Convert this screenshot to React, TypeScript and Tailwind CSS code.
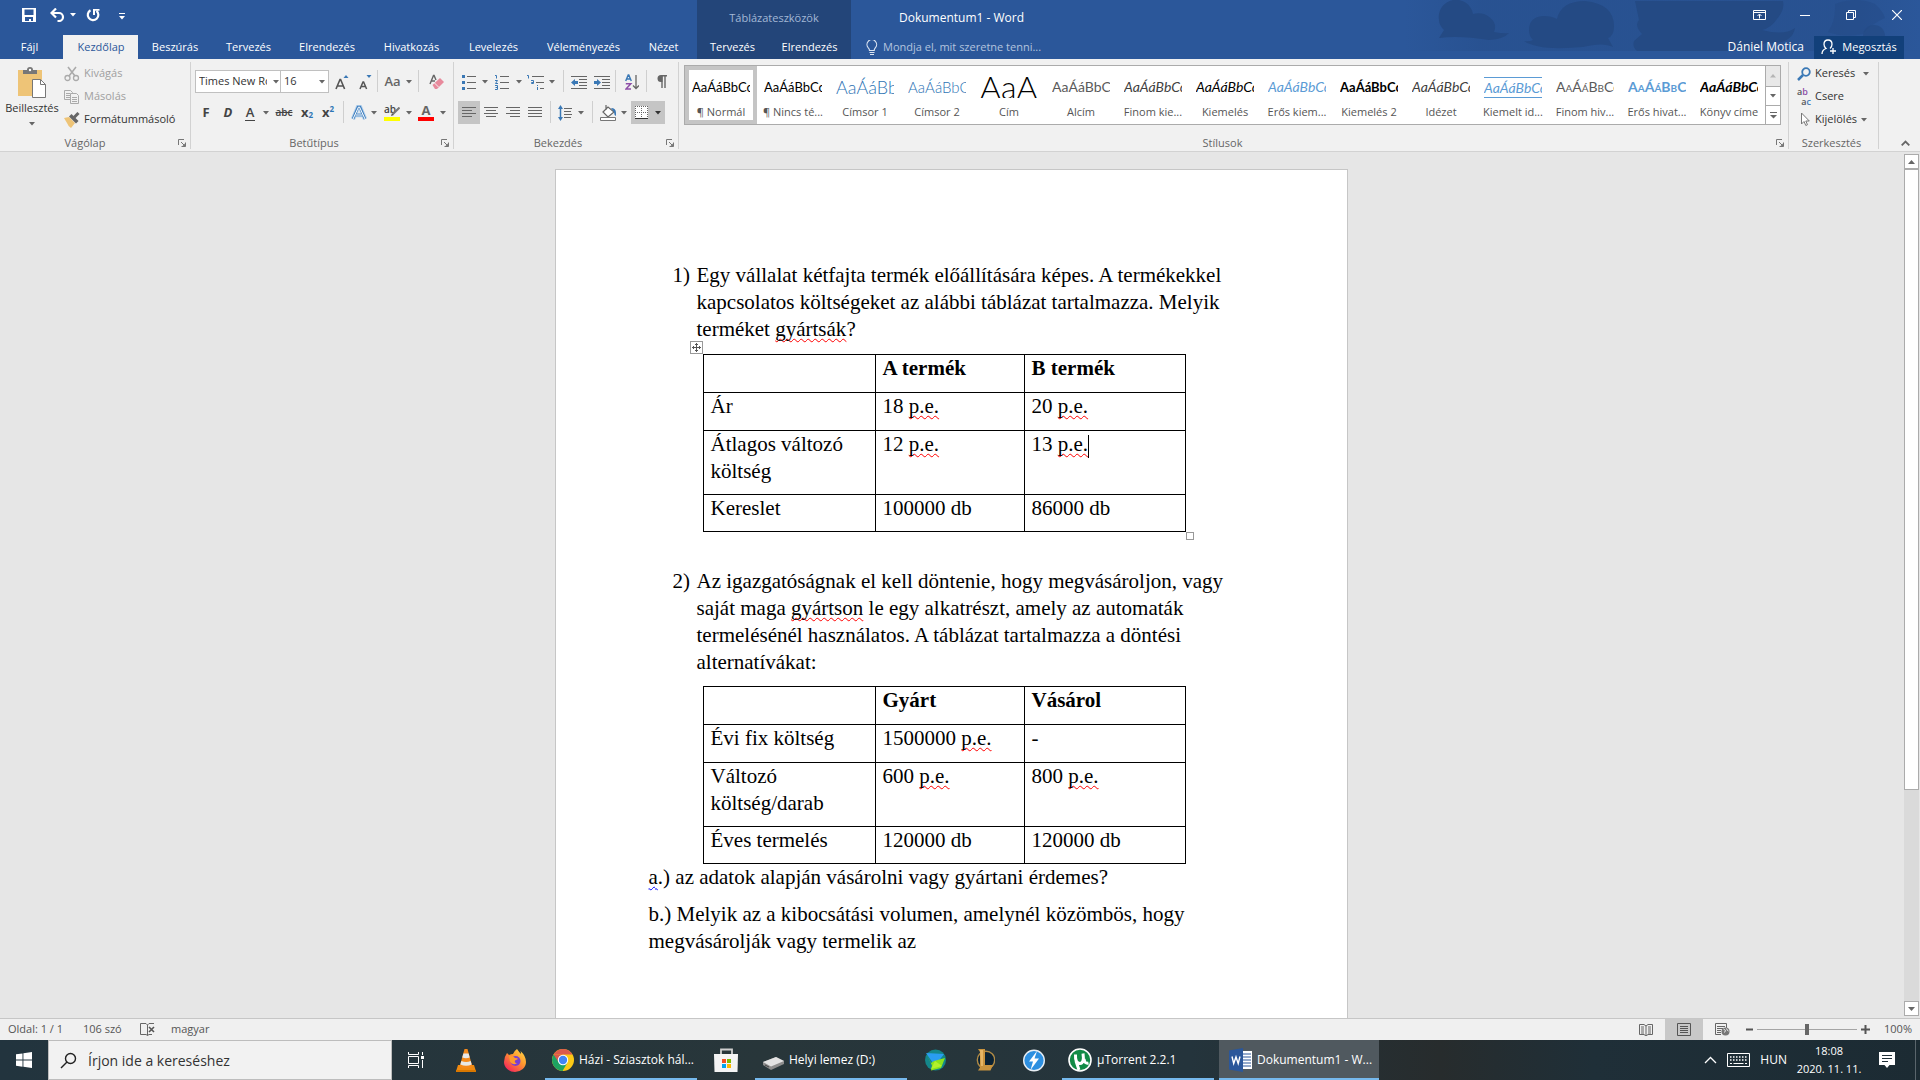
import type { ReactNode } from "react";
import clsx from "clsx";

const UI = "font-['Open_Sans','Noto_Sans',sans-serif]";

function Svg({ w = 16, h = 16, children }: { w?: number; h?: number; children: ReactNode }) {
  return (
    <svg width={w} height={h} viewBox={`0 0 ${w} ${h}`} fill="none" className="block shrink-0" aria-hidden="true">
      {children}
    </svg>
  );
}

function Arrow({ color = "#666" }: { color?: string }) {
  return (
    <Svg w={6} h={4}>
      <path d="M0 0h6L3 3.5z" fill={color} />
    </Svg>
  );
}

interface ToolProps {
  label: string;
  className?: string;
  active?: boolean;
  children: ReactNode;
}

function Tool({ label, className, active, children }: ToolProps) {
  return (
    <button
      type="button"
      aria-label={label}
      title={label}
      className={clsx("flex h-[23px] shrink-0 items-center justify-center", active && "bg-[#c5c5c5]", className)}
    >
      {children}
    </button>
  );
}

function ArrowTool({ label, className = "w-[10px]" }: { label: string; className?: string }) {
  return (
    <Tool label={label} className={className}>
      <Arrow />
    </Tool>
  );
}

function Divider({ className }: { className?: string }) {
  return <div className={clsx("h-[22px] w-px shrink-0 bg-[#cfcfcf]", className)} />;
}

function Launcher({ label }: { label: string }) {
  return (
    <button type="button" aria-label={label} className="absolute right-1 bottom-[2px]">
      <Svg w={8} h={8}>
        <path d="M.5 6V.5H6M3 3l3 3M7.500 3.500v4h-4" stroke="#777" />
        <path d="M7.500 4v3.500H4z" fill="#777" />
      </Svg>
    </button>
  );
}

interface GroupProps {
  title: string;
  className?: string;
  launcher?: boolean;
  children: ReactNode;
}

function Group({ title, className, launcher = true, children }: GroupProps) {
  return (
    <section aria-label={title} className={clsx("relative flex shrink-0 flex-col border-r border-[#d2d2d2]", className)}>
      <div className="flex-1">{children}</div>
      <h2 className={clsx("text-center text-[11px] leading-[12px] text-[#666]", launcher ? "pr-5" : "pr-3")}>{title}</h2>
      {launcher && <Launcher label={`${title} beállításai`} />}
    </section>
  );
}

/* ---------- title bar ---------- */

const tabs = [
  { name: "Beszúrás", width: "w-[74px]" },
  { name: "Tervezés", width: "w-[73px]" },
  { name: "Elrendezés", width: "w-[84px]" },
  { name: "Hivatkozás", width: "w-[85px]" },
  { name: "Levelezés", width: "w-[79px]" },
  { name: "Véleményezés", width: "w-[101px]" },
  { name: "Nézet", width: "w-[59px]" },
];

function Clouds() {
  return (
    <svg className="absolute top-0 right-0" width="515" height="59" viewBox="0 0 515 59" aria-hidden="true">
      <defs>
        <linearGradient id="haze" x1="0" x2="1">
          <stop offset="0" stopColor="#244a84" stopOpacity="0" />
          <stop offset=".15" stopColor="#244a84" stopOpacity=".4" />
          <stop offset=".85" stopColor="#244a84" stopOpacity=".4" />
          <stop offset="1" stopColor="#244a84" stopOpacity="0" />
        </linearGradient>
      </defs>
      <rect x="0" y="0" width="515" height="51" fill="url(#haze)" />
      <g fill="#244a84">
        <path d="M34 20a17 17 0 0 1 34-6a17 14 0 0 1 21 18q10 2 15 1q-5 6-20 7q-30-5-50-2l5-8q-5-5-5-10z" />
        <path d="M124 30q0-13 14-14q9 0 14 3q4-18 28-18q29 3 29 25q0 10-6 12l5 9q-10-5-30 0q-45 4-59-6q5 1 9-1q-4-4-4-10z" />
        <path d="M230 1h148q2 9-6 18q-6 9-15 11q22 6 33-2q-3 17-30 15q-14 8-40 8h-88q-5-4-3-10l8-7q-8-9-3-14z" />
        <path d="M430 4q22-8 40 0q8 7 10 14q-14 6-22 16q-20 4-35-2q8-12 7-28z" fillOpacity=".45" />
        <circle cx="469" cy="36" r="11" fillOpacity=".7" />
      </g>
    </svg>
  );
}

function TitleBar() {
  return (
    <header className="relative flex h-[59px] shrink-0 bg-[#2b579a] text-[11px] text-white">
      <Clouds />
      <div className="relative flex w-[697px] shrink-0 flex-col">
        <div className="flex h-[35px] items-center pb-[6px] pl-[22px]">
          <button type="button" aria-label="Mentés">
            <Svg w={14} h={14}>
              <path d="M0 0h14v14H0z" fill="#fff" />
              <path d="M2.500 1.500h9V7h-9zM3 9h8v4H9v-2H7v2H3z" fill="#2b579a" />
            </Svg>
          </button>
          <button type="button" aria-label="Visszavonás" className="ml-[14px]">
            <Svg w={16} h={14}>
              <path d="M6 .5L1.500 5L6 9.500M2 5h7a4 4 0 0 1 0 8H7.500" stroke="#fff" strokeWidth="2.200" />
            </Svg>
          </button>
          <button type="button" aria-label="Visszavonási lista" className="ml-[4px]">
            <Arrow color="#fff" />
          </button>
          <button type="button" aria-label="Ismétlés" className="ml-[10px]">
            <Svg w={14} h={14}>
              <path d="M4.500 2.200A5.300 5.300 0 1 0 10.500 2.800" stroke="#fff" strokeWidth="2.200" />
              <path d="M7 1h6.500v1.800H9V7H7z" fill="#fff" />
            </Svg>
          </button>
          <button type="button" aria-label="Gyorselérési eszköztár testreszabása" className="mt-[4px] ml-[19px]">
            <Svg w={6} h={7}>
              <path d="M0 .5h6" stroke="#fff" />
              <path d="M0 3h6L3 6.500z" fill="#fff" />
            </Svg>
          </button>
        </div>
        <nav className="flex h-6">
          <button type="button" className="w-[63px] pr-[4px]">
            Fájl
          </button>
          <button type="button" className="w-[75px] bg-[#f1f1f1] pl-px text-[#2b579a]">
            Kezdőlap
          </button>
          {tabs.map((t) => (
            <button type="button" key={t.name} className={t.width}>
              {t.name}
            </button>
          ))}
        </nav>
      </div>
      <div className="relative flex w-[154px] shrink-0 flex-col bg-[#234579]">
        <div className="h-[35px] text-center leading-[35px] text-[#a3b8d6]">Táblázateszközök</div>
        <div className="flex h-6">
          <button type="button" className="w-[71px]">
            Tervezés
          </button>
          <button type="button" className="w-[83px]">
            Elrendezés
          </button>
        </div>
      </div>
      <div className="relative flex min-w-0 flex-1 flex-col">
        <div className="flex h-[35px] justify-between">
          <h1 className="pl-[48px] text-[12px] leading-[35px]">Dokumentum1 - Word</h1>
          <div className="flex h-[30px]">
            <button type="button" aria-label="Menüszalag megjelenítési beállításai" className="flex w-[46px] items-center justify-center">
              <Svg w={13} h={10}>
                <path d="M.5.5h12v9H.5zM.5 2.500h12M6.500 8.500V4.500M4.500 6l2-2l2 2" stroke="#fff" />
              </Svg>
            </button>
            <button type="button" aria-label="Kis méret" className="flex w-[46px] items-center justify-center">
              <Svg w={10} h={2}>
                <path d="M0 1.500h10" stroke="#fff" />
              </Svg>
            </button>
            <button type="button" aria-label="Előző méret" className="flex w-[46px] items-center justify-center">
              <Svg w={10} h={10}>
                <path d="M.5 2.500h7v7h-7zM2.500 2.500v-2h7v7h-2" stroke="#fff" />
              </Svg>
            </button>
            <button type="button" aria-label="Bezárás" className="flex w-[46px] items-center justify-center">
              <Svg w={10} h={10}>
                <path d="M0 0l10 10M10 0L0 10" stroke="#fff" strokeWidth="1.200" />
              </Svg>
            </button>
          </div>
        </div>
        <div className="flex h-6 items-center pl-[15px]">
          <Svg w={12} h={15}>
            <path d="M3.500 10.500q0-1.500-1.200-2.700a4.800 4.800 0 1 1 7 0Q8.200 9 8.200 10.500zM3.500 12.500h5M4 14.500h4" stroke="#dbe4f1" strokeWidth="1.200" />
          </Svg>
          <input
            type="text"
            aria-label="Mondja el, mit szeretne tenni"
            placeholder="Mondja el, mit szeretne tenni..."
            className="ml-[5px] w-[220px] bg-transparent outline-none placeholder:text-[#b3c4de]"
          />
          <button type="button" className="ml-auto text-[12px]">
            Dániel Motica
          </button>
          <button type="button" className="mr-4 ml-[10px] flex h-[23px] w-[90px] items-center justify-center gap-[5px] bg-[#12407a]">
            <Svg w={16} h={16}>
              <path d="M1 15q0-4 4-5.500Q3 8 3 5.200Q3 1 7 1t4 4.200Q11 8 9 9.500M12 9v6M9 12h6" stroke="#fff" strokeWidth="1.300" />
            </Svg>
            Megosztás
          </button>
        </div>
      </div>
    </header>
  );
}

/* ---------- ribbon ---------- */

function ClipboardGroup() {
  return (
    <Group title="Vágólap" className="w-[191px]">
      <div className="flex">
        <button type="button" className="flex w-[64px] shrink-0 flex-col items-center pt-[5px] text-[11px] leading-4 text-[#333]">
          <Svg w={28} h={31}>
            <path d="M0 3h24v26H0z" fill="#eec477" />
            <path d="M5 3h4q0-3 3-3t3 3h4v4H5z" fill="#777" />
            <circle cx="12" cy="3" r="1.200" fill="#fff" />
            <path d="M14.500 12.500h8l5 5v13h-13z" fill="#fff" stroke="#777" />
            <path d="M22.500 12.500v5h5" stroke="#777" />
          </Svg>
          <span className="mt-[2px] mb-[6px]">Beillesztés</span>
          <Arrow />
        </button>
        <div className="flex flex-col items-start text-[11px] text-[#333]">
          <button type="button" disabled className="flex h-[23px] items-center gap-[4px] text-[#a0a0a0]">
            <Svg>
              <path d="M4 1l7 9M12 1l-7 9" stroke="#aaa" strokeWidth="1.600" />
              <circle cx="3.500" cy="12" r="2.500" stroke="#aaa" strokeWidth="1.300" />
              <circle cx="12" cy="12" r="2.500" stroke="#aaa" strokeWidth="1.300" />
            </Svg>
            Kivágás
          </button>
          <button type="button" disabled className="flex h-[23px] items-center gap-[4px] text-[#a0a0a0]">
            <Svg>
              <path d="M.5 1.500h6l2 2v7h-8zM2 4.500h4M2 6.500h4M2 8.500h4" stroke="#aaa" />
              <path d="M6.500 4.500h6l2 2v8h-8z" fill="#f1f1f1" stroke="#aaa" />
              <path d="M8 8.500h5M8 10.500h5M8 12.500h5" stroke="#aaa" />
            </Svg>
            Másolás
          </button>
          <button type="button" className="flex h-[23px] items-center gap-[4px]">
            <Svg>
              <path d="M0 6l5-1l6 6l-4 5q-3-2-4-5z" fill="#eec477" />
              <path d="M5 4.500L7.500 2l7 7L12 11.500z" fill="#666" />
              <path d="M10 5.500L14.500 1" stroke="#666" strokeWidth="3" />
            </Svg>
            Formátummásoló
          </button>
        </div>
      </div>
    </Group>
  );
}

function FontGroup() {
  return (
    <Group title="Betűtípus" className="w-[263px] pl-[4px]">
      <div className="flex pt-[8px]">
        <div className="relative flex h-[23px] w-[88px] items-center border border-[#c0c0c0] bg-white">
          <select
            aria-label="Betűtípus"
            className="h-full w-[71px] appearance-none overflow-hidden bg-transparent pl-[3px] text-[11px] whitespace-nowrap text-[#333] outline-none"
          >
            <option>Times New Roman</option>
          </select>
          <div className="ml-[6px]">
            <Arrow />
          </div>
        </div>
        <div className="flex h-[23px] w-[49px] items-center border border-l-0 border-[#c0c0c0] bg-white">
          <select aria-label="Betűméret" className="h-full w-[38px] appearance-none bg-transparent pl-[3px] text-[11px] text-[#333] outline-none">
            <option>16</option>
          </select>
          <Arrow />
        </div>
        <Tool label="Betűméret növelése" className="w-[25px]">
          <Svg w={14} h={16}>
            <path d="M1 15L5 5.500h.6L9.600 15M2.400 12h5.800" stroke="#555" strokeWidth="1.600" />
            <path d="M8.500 4L11 1l2.500 3z" fill="#3a78b5" />
          </Svg>
        </Tool>
        <Tool label="Betűméret csökkentése" className="w-[21px]">
          <Svg w={14} h={16}>
            <path d="M2 15l3-7h.6l3 7M3 12.500h4.600" stroke="#555" strokeWidth="1.500" />
            <path d="M8.500 1L11 4l2.500-3z" fill="#3a78b5" />
          </Svg>
        </Tool>
        <Divider className="ml-[2px]" />
        <Tool label="Kis- és nagybetűk" className="w-[40px] gap-[5px] text-[13px] font-semibold text-[#666]">
          Aa
          <Arrow />
        </Tool>
        <Divider />
        <Tool label="Formázás törlése" className="ml-[2px] w-[32px]">
          <Svg>
            <path d="M1 10L4.500 1.500h.6L7 6M2.500 7H6" stroke="#666" strokeWidth="1.400" />
            <path d="M3.500 11L11 4l4 4l-7 7H6z" fill="#e88a9c" />
            <path d="M5.500 9l4 4" stroke="#f1f1f1" />
          </Svg>
        </Tool>
      </div>
      <div className="flex pt-[8px] text-[13px] text-[#444]">
        <Tool label="Félkövér" className="w-[22px] font-bold">
          F
        </Tool>
        <Tool label="Dőlt" className="w-[22px] font-bold italic">
          D
        </Tool>
        <Tool label="Aláhúzott" className="w-[22px] font-semibold">
          <span className="border-b border-[#444] px-px leading-[15px]">A</span>
        </Tool>
        <ArrowTool label="Aláhúzás stílusa" />
        <Tool label="Áthúzott" className="w-[26px] text-[10px] font-semibold line-through">
          abc
        </Tool>
        <Tool label="Alsó index" className="w-[20px] font-bold">
          x<sub className="text-[8px] text-[#2e75b5]">2</sub>
        </Tool>
        <Tool label="Felső index" className="w-[22px] font-bold">
          x<sup className="text-[8px] text-[#2e75b5]">2</sup>
        </Tool>
        <Divider className="ml-[4px]" />
        <Tool label="Szöveghatások" className="ml-[5px] w-[20px]">
          <Svg w={16} h={16}>
            <path d="M2 14L7 2h2l5 12M4.500 10h7" stroke="#b9d3ec" strokeWidth="4.500" />
            <path d="M2 14L7 2h2l5 12M4.500 10h7" stroke="#3f7fbf" strokeWidth="2.600" />
            <path d="M2 14L7.500 2h1L14 14M4.500 10h7" stroke="#fff" strokeWidth="1" />
          </Svg>
        </Tool>
        <ArrowTool label="Szöveghatások listája" />
        <Tool label="Kiemelés színe" className="ml-px w-[24px]">
          <span className="relative flex h-4 w-4 items-start border-b-4 border-[#ffff00] text-[10px] leading-[9px] font-semibold">
            ab
            <span className="absolute top-[2px] right-0">
              <Svg w={10} h={10}>
                <path d="M9.500.5L3 7" stroke="#777" strokeWidth="2" />
                <path d="M2 6l2 2l-3 1z" fill="#555" />
              </Svg>
            </span>
          </span>
        </Tool>
        <ArrowTool label="Kiemelési színek" />
        <Tool label="Betűszín" className="w-[24px]">
          <span className="h-4 w-4 border-b-4 border-[#ff0000] text-center leading-[11px] font-bold text-[#666]">A</span>
        </Tool>
        <ArrowTool label="Betűszínek" />
      </div>
    </Group>
  );
}

function ParagraphGroup() {
  return (
    <Group title="Bekezdés" className="w-[225px] pl-[4px]">
      <div className="flex pt-[8px]">
        <Tool label="Listajelek" className="w-[22px]">
          <Svg w={14}>
            <path d="M5 2.500h9M5 8.500h9M5 14.500h9" stroke="#666" />
            <path d="M0 1h3v3H0zM0 7h3v3H0zM0 13h3v3H0z" fill="#3a78b5" />
          </Svg>
        </Tool>
        <ArrowTool label="Listajelek listája" />
        <Tool label="Számozás" className="w-[24px]">
          <Svg w={14}>
            <path d="M5 2.500h9M5 8.500h9M5 14.500h9" stroke="#666" />
            <path d="M0 1.500h1.500V4.500M0 6.500h2.500L.5 9.500h2.500M0 11.500h2.500v4H0M.5 13.500h2" stroke="#3a78b5" />
          </Svg>
        </Tool>
        <ArrowTool label="Számozási formátumok" />
        <Tool label="Többszintű lista" className="w-[24px]">
          <Svg w={18}>
            <path d="M5 2.500h12M9 8.500h8M13 14.500h4" stroke="#666" />
            <path d="M0 1.500h1.500v3M4 6.500h2.500v3H4.500V8.500h2M10.500 11v1M10.500 13v3" stroke="#3a78b5" />
          </Svg>
        </Tool>
        <ArrowTool label="Listastílusok" className="w-[8px]" />
        <Divider className="ml-[7px]" />
        <Tool label="Behúzás csökkentése" className="ml-[2px] w-[26px]">
          <Svg w={16} h={14}>
            <path d="M0 1.500h16M8 4.500h8M8 7.500h8M8 10.500h8M0 13.500h16" stroke="#666" />
            <path d="M0 7.500L4 4v2h3v3H4v2z" fill="#3a78b5" />
          </Svg>
        </Tool>
        <Tool label="Behúzás növelése" className="w-[20px]">
          <Svg w={16} h={14}>
            <path d="M0 1.500h16M8 4.500h8M8 7.500h8M8 10.500h8M0 13.500h16" stroke="#666" />
            <path d="M7 7.500L3 4v2H0v3h3v2z" fill="#3a78b5" />
          </Svg>
        </Tool>
        <Divider className="ml-[3px]" />
        <Tool label="Rendezés" className="ml-px w-[29px]">
          <Svg w={14} h={16}>
            <path d="M.7 7L3.200 1h.6l2.500 6M1.500 5h4" stroke="#3a78b5" strokeWidth="1.400" />
            <path d="M.8 9.700h5L1 15h5" stroke="#8e4fa8" strokeWidth="1.500" />
            <path d="M11 1v13M8 11.500l3 3l3-3" stroke="#666" strokeWidth="1.300" />
          </Svg>
        </Tool>
        <Divider />
        <Tool label="Minden megjelenítése" className="w-[30px]">
          <Svg w={10} h={13}>
            <path d="M5 1v12M8 1v12" stroke="#666" strokeWidth="1.400" />
            <path d="M10 0H4a3.500 3.500 0 0 0 0 7h1.500V1.500H10z" fill="#666" />
          </Svg>
        </Tool>
      </div>
      <div className="flex pt-[8px]">
        <Tool label="Balra zárt" active className="w-[22px]">
          <Svg w={14} h={12}>
            <path d="M0 .5h14M0 3.500h10M0 6.500h14M0 9.500h10" stroke="#666" />
          </Svg>
        </Tool>
        <Tool label="Középre zárt" className="w-[22px]">
          <Svg w={14} h={12}>
            <path d="M0 .5h14M2 3.500h10M0 6.500h14M2 9.500h10" stroke="#666" />
          </Svg>
        </Tool>
        <Tool label="Jobbra zárt" className="w-[22px]">
          <Svg w={14} h={12}>
            <path d="M0 .5h14M4 3.500h10M0 6.500h14M4 9.500h10" stroke="#666" />
          </Svg>
        </Tool>
        <Tool label="Sorkizárt" className="w-[22px]">
          <Svg w={14} h={12}>
            <path d="M0 .5h14M0 3.500h14M0 6.500h14M0 9.500h14" stroke="#666" />
          </Svg>
        </Tool>
        <Divider className="ml-[4px]" />
        <Tool label="Sor- és térköz" className="ml-[3px] w-[22px]">
          <Svg w={14} h={16}>
            <path d="M6 3.500h8M6 6.500h7M6 9.500h8M6 12.500h7" stroke="#666" />
            <path d="M2.500 2v12" stroke="#3a78b5" strokeWidth="1.500" />
            <path d="M0 4l2.500-4L5 4zM0 12l2.500 4L5 12z" fill="#3a78b5" />
          </Svg>
        </Tool>
        <ArrowTool label="Sorköz beállításai" />
        <Divider className="ml-[6px]" />
        <Tool label="Árnyékolás" className="ml-[3px] w-[24px]">
          <Svg w={17} h={16}>
            <path d="M3 7l5-5l6 5l-6 5zM6 0v5" stroke="#666" strokeWidth="1.200" fill="#fff" />
            <path d="M11 3q5 0 5 5v3q-2-1-2-4z" fill="#3a78b5" />
            <path d="M.5 12.500h15v3H.5z" fill="#fff" stroke="#777" />
          </Svg>
        </Tool>
        <ArrowTool label="Árnyékolás színei" className="w-[8px]" />
        <Tool label="Szegélyek" active className="ml-[3px] w-[34px] gap-[7px]">
          <Svg w={13} h={13}>
            <path d="M0 0h13v13H0z" fill="#fff" />
            <path d="M.5 0v12M6.500 0v12M12.500 0v12M0 .5h13M0 6.500h13" stroke="#666" strokeDasharray="1 1" />
            <path d="M0 12.500h13" stroke="#333" />
          </Svg>
          <Arrow color="#333" />
        </Tool>
      </div>
    </Group>
  );
}

const styleItems = [
  { name: "¶ Normál", sample: "AaÁáBbCc", look: "text-[13px] text-black", selected: true },
  { name: "¶ Nincs té...", sample: "AaÁáBbCc", look: "text-[13px] text-black" },
  { name: "Címsor 1", sample: "AaÁáBb", look: "text-[18px] font-light text-[#2e74b5]" },
  { name: "Címsor 2", sample: "AaÁáBbC", look: "text-[15px] font-light text-[#2e74b5]" },
  { name: "Cím", sample: "AaÁ", look: "text-[32px] font-light text-black" },
  { name: "Alcím", sample: "AaÁáBbC", look: "text-[14px] text-[#5a5a5a]" },
  { name: "Finom kie...", sample: "AaÁáBbCc", look: "text-[14px] italic text-[#404040]" },
  { name: "Kiemelés", sample: "AaÁáBbCc", look: "text-[14px] italic text-black" },
  { name: "Erős kiem...", sample: "AaÁáBbCc", look: "text-[14px] italic text-[#5b9bd5]" },
  { name: "Kiemelés 2", sample: "AaÁáBbCc", look: "text-[13px] font-bold text-black" },
  { name: "Idézet", sample: "AaÁáBbCc", look: "text-[14px] italic text-[#404040]" },
  { name: "Kiemelt id...", sample: "AaÁáBbCc", look: "border-y border-[#5b9bd5] text-[14px] italic text-[#5b9bd5]" },
  { name: "Finom hiv...", sample: "AaÁáBbCc", look: "text-[14px] [font-variant:small-caps] text-[#5a5a5a]" },
  { name: "Erős hivat...", sample: "AaÁáBbCc", look: "text-[14px] font-bold [font-variant:small-caps] text-[#5b9bd5]" },
  { name: "Könyv címe", sample: "AaÁáBbCc", look: "text-[14px] font-bold italic text-black" },
];

function StylesGroup() {
  return (
    <Group title="Stílusok" className="min-w-0 flex-1 pr-[7px] pl-[5px]">
      <div className="mt-[3px] flex h-[60px] border border-[#ababab] bg-white">
        <div className="grid min-w-0 flex-1 grid-cols-15 overflow-hidden">
          {styleItems.map((s) => (
            <button
              type="button"
              key={s.name}
              className={clsx("flex min-w-0 flex-col items-center border-4", s.selected ? "border-[#c5c5c5]" : "border-transparent")}
            >
              <span
                className={clsx(
                  "mt-[7px] block h-[21px] w-[58px] overflow-hidden text-left font-[Lato,'Open_Sans',sans-serif] leading-[20px] whitespace-nowrap",
                  s.look,
                )}
              >
                {s.sample}
              </span>
              <span className="mt-[6px] text-[11px] leading-[16px] whitespace-nowrap text-[#555]">{s.name}</span>
            </button>
          ))}
        </div>
        <div className="flex w-[15px] shrink-0 flex-col border-l border-[#ababab]">
          <button type="button" aria-label="Előző stílusok" className="flex h-[21px] items-center justify-center border-b border-[#ababab] bg-[#e8e8e8]">
            <Svg w={6} h={4}>
              <path d="M0 3.500h6L3 0z" fill="#b5b5b5" />
            </Svg>
          </button>
          <button type="button" aria-label="További stílusok" className="flex h-[19px] items-center justify-center border-b border-[#ababab]">
            <Arrow />
          </button>
          <button type="button" aria-label="Összes stílus" className="flex flex-1 items-center justify-center">
            <Svg w={7} h={7}>
              <path d="M0 .5h7" stroke="#666" />
              <path d="M0 3h7L3.500 6.500z" fill="#666" />
            </Svg>
          </button>
        </div>
      </div>
    </Group>
  );
}

function EditingGroup() {
  return (
    <Group title="Szerkesztés" launcher={false} className="w-[90px] pl-[8px]">
      <div className="flex flex-col items-start text-[11px] text-[#333]">
        <button type="button" className="flex h-[23px] w-[72px] items-center gap-[4px]">
          <Svg w={14} h={14}>
            <circle cx="9" cy="5" r="3.800" stroke="#3a78b5" strokeWidth="1.800" />
            <path d="M6 8L1 13" stroke="#3a78b5" strokeWidth="2.500" />
          </Svg>
          <span className="flex-1 text-left">Keresés</span>
          <Arrow />
        </button>
        <button type="button" className="flex h-[23px] items-center gap-[4px]">
          <span className="flex w-[14px] flex-col text-[9px] leading-[10px] font-semibold text-[#555]">
            <span className="text-left">
              a<span className="text-[#8e4fa8]">b</span>
            </span>
            <span className="text-right">
              a<span className="text-[#3a78b5]">c</span>
            </span>
          </span>
          Csere
        </button>
        <button type="button" className="flex h-[23px] items-center gap-[4px]">
          <Svg w={14} h={15}>
            <path d="M4.500 1v11l2.500-2.500l1.800 4l1.700-.8l-1.700-3.700h3.500z" fill="#fff" stroke="#777" />
          </Svg>
          Kijelölés
          <Arrow />
        </button>
      </div>
    </Group>
  );
}

function Ribbon() {
  return (
    <div className="flex h-[93px] shrink-0 border-b border-[#d2d2d2] bg-[#f1f1f1] pt-[3px] pb-[2px]">
      <ClipboardGroup />
      <FontGroup />
      <ParagraphGroup />
      <StylesGroup />
      <EditingGroup />
      <div className="flex w-[41px] shrink-0 items-end justify-end pr-[10px] pb-[3px]">
        <button type="button" aria-label="Menüszalag összecsukása">
          <Svg w={9} h={6}>
            <path d="M.7 5.300L4.500 1.500l3.800 3.800" stroke="#666" strokeWidth="1.800" />
          </Svg>
        </button>
      </div>
    </div>
  );
}

/* ---------- document ---------- */

function Typo({ children, grammar }: { children: ReactNode; grammar?: boolean }) {
  return (
    <span
      className={clsx(
        "underline decoration-1 decoration-wavy underline-offset-2 [text-decoration-skip-ink:none]",
        grammar ? "decoration-[#0000ff]" : "decoration-[#ff0000]",
      )}
    >
      {children}
    </span>
  );
}

interface CostTableProps {
  head: string[];
  rows: ReactNode[][];
  selected?: boolean;
}

function CostTable({ head, rows, selected }: CostTableProps) {
  return (
    <div className="relative ml-[54px] w-[483px]">
      {selected && (
        <>
          <span className="absolute -top-[13px] -left-[13px] flex h-[13px] w-[13px] items-center justify-center border border-[#999] bg-white">
            <Svg w={9} h={9}>
              <path d="M4.500 0v9M0 4.500h9M3 1.500h3M3 7.500h3M1.500 3v3M7.500 3v3" stroke="#555" />
            </Svg>
          </span>
          <span className="absolute -right-[8px] -bottom-[8px] h-[8px] w-[8px] border border-[#999] bg-white" />
        </>
      )}
      <table className="w-full table-fixed border-collapse border border-black">
        <colgroup>
          <col className="w-[172px]" />
          <col className="w-[149px]" />
          <col />
        </colgroup>
        <thead>
          <tr>
            {head.map((h) => (
              <th key={h} className="border border-black px-[7px] pb-[10px] text-left align-top font-bold">
                {h}
              </th>
            ))}
          </tr>
        </thead>
        <tbody>
          {rows.map((cells, i) => (
            <tr key={i}>
              {cells.map((c, j) => (
                <td key={j} className={clsx("border border-black px-[7px] align-top", i > 0 ? "pb-[9px]" : "pb-[10px]")}>
                  {c}
                </td>
              ))}
            </tr>
          ))}
        </tbody>
      </table>
    </div>
  );
}

const pe = <Typo>p.e.</Typo>;

function Page() {
  return (
    <article className="mt-[17px] w-[793px] shrink-0 border border-b-0 border-[#c6c6c6] bg-white pt-[92px] pr-[89px] pl-[93px] font-['Liberation_Serif',serif] text-[21px] leading-[27px] text-black">
      <div className="flex pl-[24px]">
        <span className="w-[24px] shrink-0">1)</span>
        <p className="whitespace-nowrap">
          Egy vállalat kétfajta termék előállítására képes. A termékekkel
          <br />
          kapcsolatos költségeket az alábbi táblázat tartalmazza. Melyik
          <br />
          terméket <Typo>gyártsák</Typo>?
        </p>
      </div>
      <div className="mt-[11px]">
        <CostTable
          selected
          head={["", "A termék", "B termék"]}
          rows={[
            ["Ár", <>18 {pe}</>, <>20 {pe}</>],
            [
              "Átlagos változó költség",
              <>12 {pe}</>,
              <>
                13 {pe}
                <span className="inline-block h-[23px] w-px bg-black align-middle" />
              </>,
            ],
            ["Kereslet", "100000 db", "86000 db"],
          ]}
        />
      </div>
      <div className="mt-[36px] flex pl-[24px]">
        <span className="w-[24px] shrink-0">2)</span>
        <p className="whitespace-nowrap">
          Az igazgatóságnak el kell döntenie, hogy megvásároljon, vagy
          <br />
          saját maga <Typo>gyártson</Typo> le egy alkatrészt, amely az automaták
          <br />
          termelésénél használatos. A táblázat tartalmazza a döntési
          <br />
          alternatívákat:
        </p>
      </div>
      <div className="mt-[10px]">
        <CostTable
          head={["", "Gyárt", "Vásárol"]}
          rows={[
            ["Évi fix költség", <>1500000 {pe}</>, "-"],
            ["Változó költség/darab", <>600 {pe}</>, <>800 {pe}</>],
            ["Éves termelés", "120000 db", "120000 db"],
          ]}
        />
      </div>
      <p>
        <Typo grammar>a</Typo>.) az adatok alapján vásárolni vagy gyártani érdemes?
      </p>
      <p className="mt-[10px] whitespace-nowrap">
        b.) Melyik az a kibocsátási volumen, amelynél közömbös, hogy
        <br />
        megvásárolják vagy termelik az
      </p>
    </article>
  );
}

function ScrollBar() {
  return (
    <div className="mt-[2px] mr-px mb-[2px] flex w-[15px] shrink-0 flex-col bg-[#dadada]">
      <button type="button" aria-label="Görgetés fel" className="flex h-[15px] items-center justify-center border border-[#ababab] bg-white">
        <Svg w={7} h={4}>
          <path d="M0 4h7L3.500 0z" fill="#666" />
        </Svg>
      </button>
      <div className="h-[72%] border border-[#ababab] bg-white" />
      <div className="flex-1" />
      <button type="button" aria-label="Görgetés le" className="flex h-[15px] items-center justify-center border border-[#ababab] bg-white">
        <Svg w={7} h={4}>
          <path d="M0 0h7L3.500 4z" fill="#666" />
        </Svg>
      </button>
    </div>
  );
}

/* ---------- status bar ---------- */

function StatusBar() {
  return (
    <footer className="flex h-[22px] shrink-0 items-center border-t border-[#c6c6c6] bg-[#f0f0f0] pr-2 pl-2 text-[11px] text-[#555]">
      <span className="w-[75px]">Oldal: 1 / 1</span>
      <span className="w-[57px]">106 szó</span>
      <button type="button" aria-label="Nyelvi ellenőrzés">
        <Svg w={15} h={13}>
          <path d="M7.500 2v10.500L6 11.500H.5v-11H6l1.500 1.500L9 .5h5M7.500 12.500L9 11.500h3" stroke="#666" />
          <path d="M9 4l5 5M14 4L9 9" stroke="#555" strokeWidth="1.600" />
        </Svg>
      </button>
      <button type="button" className="ml-4">
        magyar
      </button>
      <div className="ml-auto flex items-center">
        <button type="button" aria-label="Olvasási mód" className="mr-[12px]">
          <Svg w={14} h={12}>
            <path d="M.5.5H5L7 2l2-1.500h4.500v10H9L7 12l-2-1.500H.5zM7 2v10M2 3h3M2 5h3M2 7h3M2 9h3M9 3h3M9 5h3M9 7h3M9 9h3" stroke="#666" />
          </Svg>
        </button>
        <button type="button" aria-label="Nyomtatási elrendezés" className="flex h-[21px] w-[38px] items-center justify-center bg-[#c8c8c8]">
          <Svg w={14} h={13}>
            <path d="M.5.5h13v12H.5zM3 3.500h8M3 5.500h8M3 7.500h8M3 9.500h8" stroke="#555" />
          </Svg>
        </button>
        <button type="button" aria-label="Webes elrendezés" className="ml-[12px]">
          <Svg w={15} h={13}>
            <path d="M6 11.500H.5V.5h11V5M2 3.500h8M2 5.500h6M2 7.500h4M2 9.500h4" stroke="#666" />
            <circle cx="10.500" cy="8.500" r="4" fill="#777" />
            <path d="M8.500 6l2 1.500l-1 2M11.500 5.500l1 2l1 .5" stroke="#f0f0f0" />
          </Svg>
        </button>
        <button type="button" aria-label="Kicsinyítés" className="ml-[16px]">
          <Svg w={7} h={9}>
            <path d="M0 4.500h7" stroke="#555" strokeWidth="2" />
          </Svg>
        </button>
        <input
          type="range"
          aria-label="Nagyítás"
          min={0}
          max={100}
          defaultValue={50}
          className="mx-[4px] h-[12px] w-[100px] appearance-none bg-[linear-gradient(#a5a5a5,#a5a5a5)] bg-[length:100%_1px] bg-center bg-no-repeat [&::-webkit-slider-thumb]:h-[11px] [&::-webkit-slider-thumb]:w-[4px] [&::-webkit-slider-thumb]:appearance-none [&::-webkit-slider-thumb]:bg-[#666]"
        />
        <button type="button" aria-label="Nagyítás növelése">
          <Svg w={9} h={9}>
            <path d="M0 4.500h9M4.500 0v9" stroke="#555" strokeWidth="2" />
          </Svg>
        </button>
        <span className="w-[42px] text-right">100%</span>
      </div>
    </footer>
  );
}

/* ---------- taskbar ---------- */

interface TaskProps {
  icon: ReactNode;
  title: string;
  className: string;
  active?: boolean;
}

function Task({ icon, title, className, active }: TaskProps) {
  return (
    <button
      type="button"
      className={clsx(
        "flex h-full shrink-0 items-center gap-[5px] overflow-hidden border-b-2 border-[#76b9ed] pt-[2px] whitespace-nowrap",
        active && "bg-[#50595f]",
        className,
      )}
    >
      {icon}
      {title}
    </button>
  );
}

function Pinned({ label, children }: { label: string; children: ReactNode }) {
  return (
    <button type="button" aria-label={label} className="flex h-full w-[49px] shrink-0 items-center justify-center">
      {children}
    </button>
  );
}

function ChromeIcon() {
  return (
    <Svg w={22} h={22}>
      <circle cx="11" cy="11" r="11" fill="#fbc916" />
      <path d="M1.500 5.500A11 11 0 0 0 10.500 22L15.500 13.500L11 11z" fill="#1da462" />
      <path d="M1.500 5.500A11 11 0 0 1 20.500 5.500H11z" fill="#db5a4c" />
      <path d="M1.500 5.500L6.500 13L11 5.500z" fill="#db5a4c" />
      <circle cx="11" cy="11" r="5.200" fill="#fff" />
      <circle cx="11" cy="11" r="4.200" fill="#4285f4" />
    </Svg>
  );
}

function Taskbar() {
  return (
    <div className="flex h-10 shrink-0 items-center bg-[linear-gradient(90deg,#22343e,#28363a_40%,#24343c_62%,#272c2d_75%,#1f2f38_83%,#1c2b33)] text-[12px] text-white">
      <button type="button" aria-label="Start" className="flex h-full w-12 shrink-0 items-center justify-center">
        <Svg w={16} h={16}>
          <path d="M0 2.300L6.500 1.400v6.200H0zM7.400 1.300L16 0v7.600H7.400zM0 8.500h6.500v6.200L0 13.800zM7.400 8.500H16V16l-8.600-1.200z" fill="#fff" />
        </Svg>
      </button>
      <label className="flex h-full w-[344px] shrink-0 items-center border border-[#bdbdbd] bg-[#f2f2f2] pl-[11px]">
        <Svg w={17} h={17}>
          <circle cx="10.500" cy="6.500" r="5" stroke="#222" strokeWidth="1.400" />
          <path d="M7 10l-6 6" stroke="#222" strokeWidth="1.400" />
        </Svg>
        <input
          type="text"
          aria-label="Keresés"
          placeholder="Írjon ide a kereséshez"
          className="ml-[11px] min-w-0 flex-1 bg-transparent text-[14px] outline-none placeholder:text-[#333]"
        />
      </label>
      <Pinned label="Feladatnézet">
        <Svg w={17} h={16}>
          <path d="M.5 0v2.500h10V0M.5 4.500h10v7H.5zM.5 16v-2.500h10V16M14.500 0v3M14.500 8v8" stroke="#fff" />
          <path d="M13 4h3v3h-3z" fill="#fff" />
        </Svg>
      </Pinned>
      <Pinned label="VLC">
        <Svg w={20} h={23}>
          <path d="M2 16h16l2 6.500H0z" fill="#f08a10" />
          <path d="M8.500 0h3L16.500 18q-6.500 3-13 0z" fill="#f58a1c" />
          <path d="M7.400 4.500h5.200l1.100 4q-3.700 1.500-7.400 0zM5.300 12q5 2 9.400 0l1 3.500q-5.500 2.500-11.300 0z" fill="#e8e8e8" />
          <path d="M0 21h20v2H0z" fill="#d97700" />
        </Svg>
      </Pinned>
      <Pinned label="Firefox">
        <Svg w={22} h={23}>
          <defs>
            <linearGradient id="fox" x1="1" y1="0" x2=".2" y2="1">
              <stop offset="0" stopColor="#ffe14d" />
              <stop offset=".45" stopColor="#ff9a2e" />
              <stop offset="1" stopColor="#f5205c" />
            </linearGradient>
          </defs>
          <path d="M3 4q1 1 2 2q2-1 4-1q1-3 4-5q2 3 4 5q0-2-.5-3Q22 7 22 13a11 10 0 0 1-22 0Q0 8 3 4z" fill="url(#fox)" />
          <circle cx="11.500" cy="12" r="5" fill="#7a3fd0" />
          <path d="M5 7q4-1 6 2q3 0 3 1l-3 1.500q-1 2 2 3q-5 2-7-2z" fill="#ff9a2e" />
        </Svg>
      </Pinned>
      <Task icon={<ChromeIcon />} title="Házi - Sziasztok hál..." className="ml-[6px] w-[152px] pl-[7px]" />
      <div className="ml-[4px] h-full">
        <Pinned label="Microsoft Store">
          <Svg w={24} h={24}>
            <path d="M7 7V1.500h11V7" stroke="#cfcfcf" strokeWidth="1.800" />
            <path d="M0 6h24l-.5 18H.5z" fill="#f4f4f4" />
            <path d="M8 11h4v4H8z" fill="#f25022" />
            <path d="M13 11h4v4h-4z" fill="#7fba00" />
            <path d="M8 16h4v4H8z" fill="#00a4ef" />
            <path d="M13 16h4v4h-4z" fill="#ffb900" />
          </Svg>
        </Pinned>
      </div>
      <Task
        icon={
          <Svg w={21} h={20}>
            <path d="M0 12l13-5l8 4v3L8 20l-8-5z" fill="#8d8d8d" />
            <path d="M0 12l13-5l8 4L8 16.500z" fill="#e3e3e3" />
            <path d="M2 15l4 2" stroke="#444" />
          </Svg>
        }
        title="Helyi lemez (D:)"
        className="ml-[5px] w-[152px] pl-[8px]"
      />
      <div className="ml-[4px] flex h-full">
        <Pinned label="Letöltéskezelő">
          <Svg w={21} h={22}>
            <circle cx="10.500" cy="11" r="10.500" fill="#14868a" />
            <path d="M1 4l18 1l-9 12z" fill="#2a9df0" />
            <path d="M1 4l5 10l3-2l11-3l-4 10l-10 2.500l1-5z" fill="#8be31c" />
            <path d="M6 20l4-8l7 5z" fill="#b3f02c" />
            <path d="M5 5l13 1l-8 5z" fill="#2a9df0" />
          </Svg>
        </Pinned>
        <Pinned label="League of Legends">
          <Svg w={20} h={22}>
            <circle cx="11" cy="11" r="8.700" fill="#0b2233" stroke="#b08a45" strokeWidth="1.400" />
            <path d="M3 0h7v16h8l-2.500 5.500H3l2-3V3z" fill="#c8933e" />
            <path d="M5 1h3v16H6z" fill="#e5b565" />
          </Svg>
        </Pinned>
        <Pinned label="DAEMON Tools">
          <Svg w={22} h={23}>
            <circle cx="11" cy="11.500" r="10.300" fill="#2d8fe0" stroke="#e8eef4" strokeWidth="1.400" />
            <path d="M14 2L6 12.500h4L7.500 21L16 9.500h-4.500z" fill="#fff" />
          </Svg>
        </Pinned>
      </div>
      <Task
        icon={
          <Svg w={24} h={24}>
            <circle cx="12" cy="12" r="11" fill="#118a45" stroke="#fff" strokeWidth="1.600" />
            <path d="M7.500 6.500q-.5 9 4.500 9q4.500-.5 3-10M16 11q.5 5 4.500 4M8 13l3 9" stroke="#fff" strokeWidth="3" />
          </Svg>
        }
        title="µTorrent 2.2.1"
        className="ml-[4px] w-[152px] pl-[6px]"
      />
      <Task
        active
        icon={
          <Svg w={23} h={24}>
            <path d="M12 3h11v18H12z" fill="#fff" />
            <path d="M14 6h8M14 9h8M14 12h8M14 15h8M14 18h8" stroke="#2b579a" />
            <path d="M0 2.500L14 0v24L0 21.500z" fill="#2b579a" />
            <path d="M3 8.500l1.700 7L7 9l2.200 6.500L11 8.500" stroke="#fff" strokeWidth="1.400" />
          </Svg>
        }
        title="Dokumentum1 - W..."
        className="ml-[5px] w-[160px] pl-[10px]"
      />
      <div className="ml-auto flex h-full items-center">
        <button type="button" aria-label="Rejtett ikonok" className="mr-[10px]">
          <Svg w={13} h={8}>
            <path d="M1 7l5.500-5.500L12 7" stroke="#fff" strokeWidth="1.300" />
          </Svg>
        </button>
        <button type="button" aria-label="Érintőbillentyűzet" className="mr-[10px]">
          <Svg w={23} h={14}>
            <path d="M.5.5h22v13H.5z" stroke="#fff" />
            <path d="M3 4h17M3 7h17" stroke="#fff" strokeWidth="1.400" strokeDasharray="1.500 1.500" />
            <path d="M3 10.500h2M6.500 10.500h10M18 10.500h2" stroke="#fff" strokeWidth="1.200" />
          </Svg>
        </button>
        <button type="button">HUN</button>
        <button type="button" className="mx-[9px] w-[66px] text-[11px] leading-[18px] whitespace-nowrap">
          18:08
          <br />
          2020. 11. 11.
        </button>
        <button type="button" aria-label="Műveletközpont" className="mr-[20px] ml-[8px]">
          <Svg w={16} h={16}>
            <path d="M0 0h16v13h-5.500L8 16l-2.500-3H0z" fill="#fff" />
            <path d="M3 3.500h10M3 6.500h10M3 9.500h6" stroke="#1f2f38" strokeWidth="1.200" />
          </Svg>
        </button>
        <div className="mr-[4px] h-full w-px bg-[#5a656c]" />
      </div>
    </div>
  );
}

export default function App() {
  return (
    <div className={clsx("flex h-screen flex-col overflow-hidden bg-[#e6e6e6]", UI)}>
      <TitleBar />
      <Ribbon />
      <main className="flex min-h-0 flex-1">
        <div className="flex min-w-0 flex-1 justify-center overflow-hidden pr-[2px]">
          <Page />
        </div>
        <ScrollBar />
      </main>
      <StatusBar />
      <Taskbar />
    </div>
  );
}
